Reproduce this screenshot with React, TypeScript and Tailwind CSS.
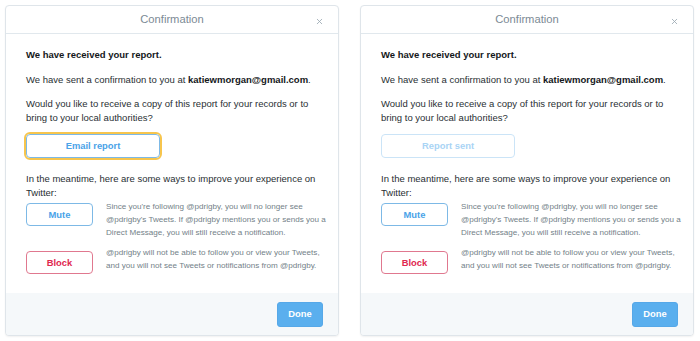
import { X } from "lucide-react";

type DialogProps = {
  sent?: boolean;
};

function ConfirmationDialog({ sent = false }: DialogProps) {
  return (
    <div className="flex h-[331px] w-[334px] flex-col overflow-hidden rounded-[4px] border border-[#dfe5ea] bg-white shadow-[0_1px_2px_rgba(0,0,0,0.06)]">
      <div className="relative flex h-[28px] shrink-0 items-center justify-center border-b border-[#e1e8ed]">
        <span className="text-[11.2px] text-[#7c8a95]">Confirmation</span>
        <X className="absolute right-[14px] top-[11px] h-[9px] w-[9px] text-[#9aa7b1]" strokeWidth={2.2} />
      </div>

      <div className="min-h-0 flex-1 overflow-hidden pl-[20px] pr-[11px] pt-[14px] text-[9.5px] leading-[14px] text-[#292f33]">
        <p className="font-bold text-[#14171a]">We have received your report.</p>
        <p className="mt-[11px]">
          We have sent a confirmation to you at{" "}
          <span className="font-bold text-[#14171a]">katiewmorgan@gmail.com</span>.
        </p>
        <p className="mt-[10px] pr-[11px]">
          Would you like to receive a copy of this report for your records or to
          bring to your local authorities?
        </p>

        {sent ? (
          <button
            type="button"
            className="mt-[9px] flex h-[24px] w-[134px] items-center justify-center rounded-[4px] border border-[#cbe4f7] text-[9.4px] font-bold text-[#a9d4f5]"
          >
            Report sent
          </button>
        ) : (
          <button
            type="button"
            className="mt-[9px] flex h-[24px] w-[134px] items-center justify-center rounded-[4px] border border-[#7db9e6] text-[9.4px] font-bold text-[#4aa3e8] outline-2 outline-[#f7c54d]"
          >
            Email report
          </button>
        )}

        <p className="mt-[14px] pr-[11px]">
          In the meantime, here are some ways to improve your experience on
          Twitter:
        </p>

        <div className="flex items-start gap-[13px]">
          <button
            type="button"
            className="mt-[3px] flex h-[23px] w-[67px] shrink-0 items-center justify-center rounded-[4px] border border-[#7db9e6] text-[9.4px] font-bold text-[#4aa3e8]"
          >
            Mute
          </button>
          <p className="text-[8.1px] leading-[13px] text-[#737f88]">
            Since you&apos;re following @pdrigby, you will no longer see
            @pdrigby&apos;s Tweets. If @pdrigby mentions you or sends you a
            Direct Message, you will still receive a notification.
          </p>
        </div>

        <div className="mt-[7px] flex items-start gap-[13px] pr-[3px]">
          <button
            type="button"
            className="mt-[5px] flex h-[23px] w-[67px] shrink-0 items-center justify-center rounded-[4px] border border-[#e0788f] text-[9.4px] font-bold text-[#e0284f]"
          >
            Block
          </button>
          <p className="text-[8.1px] leading-[13px] text-[#737f88]">
            @pdrigby will not be able to follow you or view your Tweets,
            and you will not see Tweets or notifications from @pdrigby.
          </p>
        </div>
      </div>

      <div className="flex h-[42px] shrink-0 items-center justify-end bg-[#f5f8fa] px-[15px]">
        <button
          type="button"
          className="h-[25px] w-[46px] rounded-[3px] border border-[#56a8e8] bg-[#5aafee] text-[9.4px] font-bold text-white"
        >
          Done
        </button>
      </div>
    </div>
  );
}

export default function App() {
  return (
    <div className="flex h-[341px] w-[700px] gap-[21px] bg-white pl-[5px] pt-[5px] font-['Liberation_Sans',Arial,sans-serif]">
      <ConfirmationDialog />
      <ConfirmationDialog sent />
    </div>
  );
}
